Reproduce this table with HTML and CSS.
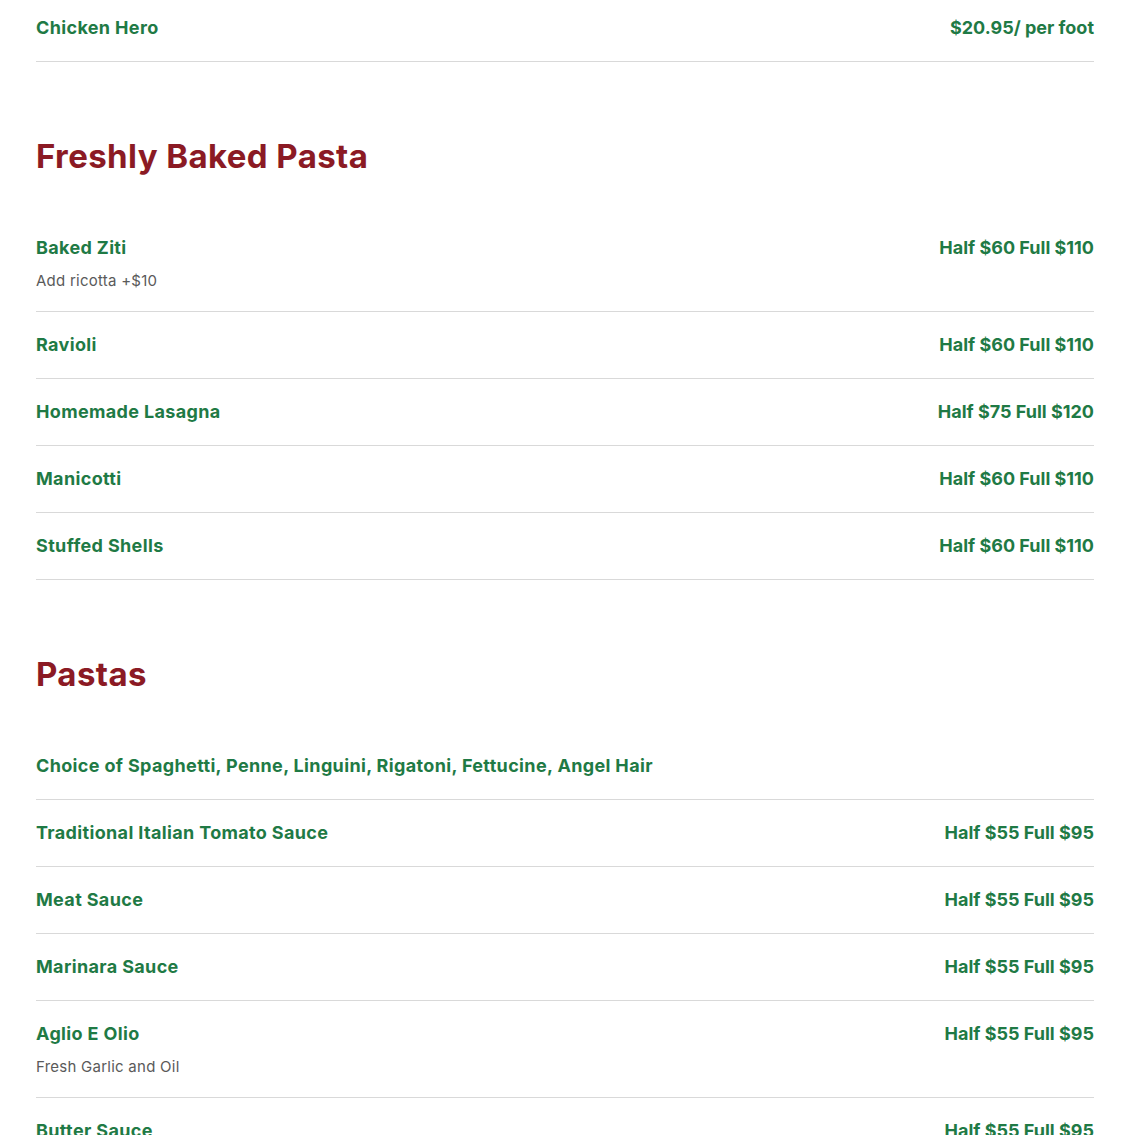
FILE: index.html
```html
<!DOCTYPE html>
<html lang="en">
<head>
<meta charset="utf-8">
<title>Menu</title>
<link rel="stylesheet" href="styles.css">
</head>
<body>
<main class="menu">
  <section class="section">
    <div class="item">
      <div class="item__row"><span class="item__name">Chicken Hero</span><span class="item__price">$20.95/ per foot</span></div>
    </div>
  </section>

  <section class="section">
    <h2 class="section__title">Freshly Baked Pasta</h2>
    <div class="item item--desc">
      <div class="item__row"><span class="item__name">Baked Ziti</span><span class="item__price">Half $60 Full $110</span></div>
      <p class="item__desc">Add ricotta +$10</p>
    </div>
    <div class="item">
      <div class="item__row"><span class="item__name">Ravioli</span><span class="item__price">Half $60 Full $110</span></div>
    </div>
    <div class="item">
      <div class="item__row"><span class="item__name">Homemade Lasagna</span><span class="item__price">Half $75 Full $120</span></div>
    </div>
    <div class="item">
      <div class="item__row"><span class="item__name">Manicotti</span><span class="item__price">Half $60 Full $110</span></div>
    </div>
    <div class="item">
      <div class="item__row"><span class="item__name">Stuffed Shells</span><span class="item__price">Half $60 Full $110</span></div>
    </div>
  </section>

  <section class="section">
    <h2 class="section__title">Pastas</h2>
    <div class="item">
      <div class="item__row"><span class="item__name">Choice of Spaghetti, Penne, Linguini, Rigatoni, Fettucine, Angel Hair</span></div>
    </div>
    <div class="item">
      <div class="item__row"><span class="item__name">Traditional Italian Tomato Sauce</span><span class="item__price">Half $55 Full $95</span></div>
    </div>
    <div class="item">
      <div class="item__row"><span class="item__name">Meat Sauce</span><span class="item__price">Half $55 Full $95</span></div>
    </div>
    <div class="item">
      <div class="item__row"><span class="item__name">Marinara Sauce</span><span class="item__price">Half $55 Full $95</span></div>
    </div>
    <div class="item item--desc">
      <div class="item__row"><span class="item__name">Aglio E Olio</span><span class="item__price">Half $55 Full $95</span></div>
      <p class="item__desc">Fresh Garlic and Oil</p>
    </div>
    <div class="item">
      <div class="item__row"><span class="item__name">Butter Sauce</span><span class="item__price">Half $55 Full $95</span></div>
    </div>
  </section>
</main>
</body>
</html>
```
FILE: styles.css
```css
html, body {
  margin: 0;
  padding: 0;
  background: #ffffff;
}

body {
  font-family: Inter, "Open Sans", "Liberation Sans", sans-serif;
  overflow: hidden;
}

.menu {
  padding: 0 36px;
  margin-top: -5px;
}

.section {
  display: flex;
  flex-direction: column;
}

.section + .section {
  margin-top: 70px;
}

.section__title {
  margin: 0 0 35px;
  font-size: 33px;
  line-height: 48px;
  font-weight: 700;
  letter-spacing: 0.4px;
  color: #8b1a24;
}

.item {
  padding: 19px 0 20px;
  border-bottom: 1px solid #d9d9d9;
}

.item--desc {
  padding-bottom: 18px;
}

.item__row {
  display: flex;
  justify-content: space-between;
  align-items: center;
  gap: 24px;
}

.item__name,
.item__price {
  font-size: 18px;
  line-height: 27px;
  font-weight: 700;
  color: #1f7a45;
  white-space: nowrap;
}

.item__name {
  letter-spacing: 0.35px;
}

.item__desc {
  margin: 8px 0 0;
  font-size: 15px;
  line-height: 24px;
  letter-spacing: 0.25px;
  color: #5a5a5a;
}
```
